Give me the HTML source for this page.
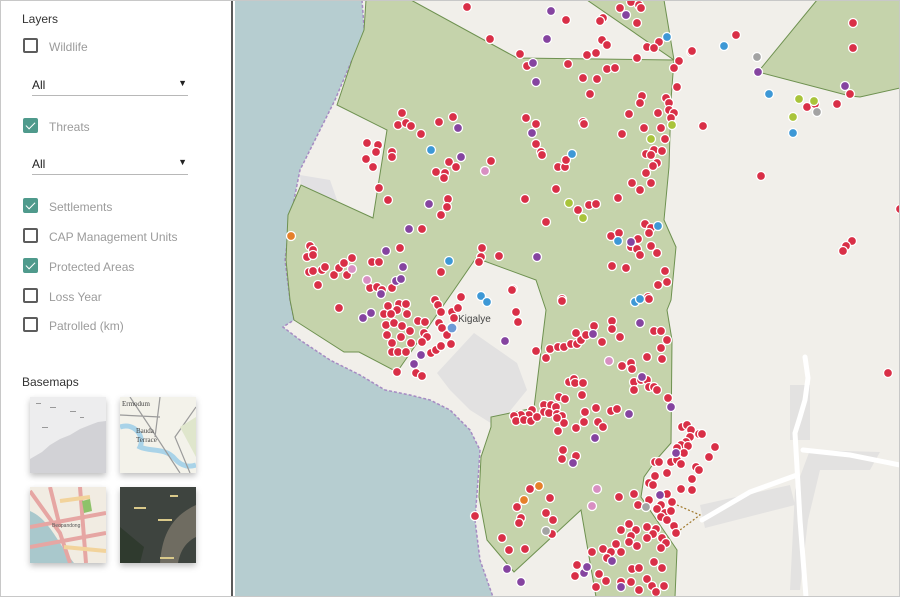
<!DOCTYPE html>
<html><head><meta charset="utf-8"><style>
*{margin:0;padding:0;box-sizing:border-box}
html,body{width:900px;height:597px;overflow:hidden}
body{background:#fff;font-family:"Liberation Sans",Arial,sans-serif;position:relative}
#frame{position:absolute;left:0;top:0;width:900px;height:597px;border:1px solid #c8c8c8;z-index:5;pointer-events:none}
#side{position:absolute;left:0;top:0;width:233px;height:597px;background:#fff;border-right:2px solid #5a5a5a;overflow:hidden}
.h{position:absolute;left:22px;font-size:12px;color:#333}
.cb{position:absolute;left:23px;width:15px;height:15px;border:2px solid #5c5c5c;border-radius:2px;background:#fff}
.cb.on{border:none;background:#4f9a8c}
.cb.on:after{content:"";position:absolute;left:5px;top:2px;width:4px;height:8px;border:solid #fff;border-width:0 1.5px 1.5px 0;transform:rotate(45deg)}
.lb{position:absolute;left:49px;font-size:12px;color:#9b9b9b}
.sel{position:absolute;left:32px;width:156px;height:18px;border-bottom:1.5px solid #b8b8b8;font-size:12px;color:#222}
.sel span{position:absolute;right:1px;top:0;font-size:9px}
.th{position:absolute;width:76px;height:76px;box-shadow:0 3px 6px rgba(0,0,0,.25);overflow:hidden}
#map{position:absolute;left:235px;top:0;display:block}
</style></head><body>
<div id="side">
<div class="h" style="top:12px">Layers</div>
<div class="cb" style="top:38px"></div><div class="lb" style="top:40px">Wildlife</div>
<div class="sel" style="top:78px">All<span>▼</span></div>
<div class="cb on" style="top:118px"></div><div class="lb" style="top:120px">Threats</div>
<div class="sel" style="top:157px">All<span>▼</span></div>
<div class="cb on" style="top:198px"></div><div class="lb" style="top:200px">Settlements</div>
<div class="cb" style="top:228px"></div><div class="lb" style="top:230px">CAP Management Units</div>
<div class="cb on" style="top:258px"></div><div class="lb" style="top:260px">Protected Areas</div>
<div class="cb" style="top:288px"></div><div class="lb" style="top:290px">Loss Year</div>
<div class="cb" style="top:317px"></div><div class="lb" style="top:319px">Patrolled (km)</div>
<div class="h" style="top:375px">Basemaps</div>
<div class="th" style="left:30px;top:397px;background:#ededee">
<svg width="76" height="76"><path d="M0 76V62L12 55 20 48 30 42 40 38 50 32 60 28 68 25 76 24V76Z" fill="#d2d2d6"/><g fill="#999"><rect x="6" y="6" width="5" height="1"/><rect x="20" y="10" width="6" height="1"/><rect x="40" y="14" width="6" height="1"/><rect x="12" y="30" width="6" height="1"/><rect x="50" y="20" width="4" height="1"/></g></svg></div>
<div class="th" style="left:120px;top:397px;background:#f3f2ea">
<svg width="76" height="76"><path d="M0 30C15 25 25 40 20 50 30 55 45 50 55 62 62 70 70 70 76 68" stroke="#a9d3e8" stroke-width="5" fill="none"/><path d="M10 0L30 30 60 76M40 0 35 40M76 10 55 40 70 76M0 18 40 20" stroke="#9b9b9b" stroke-width="1.2" fill="none"/><path d="M60 30 76 20V60Z" fill="#dfe6cc"/><text x="2" y="9" font-size="7" fill="#444" font-family="Liberation Serif">Ermodum</text><text x="16" y="36" font-size="7" fill="#444" font-family="Liberation Serif">Bauda</text><text x="16" y="45" font-size="7" fill="#444" font-family="Liberation Serif">Terrace</text></svg></div>
<div class="th" style="left:30px;top:487px;background:#f1ece2">
<svg width="76" height="76"><path d="M0 24C14 30 22 44 30 56 36 66 44 76 44 76H0Z" fill="#a9c8cc"/><path d="M0 4 30 46 40 76M0 40 76 26M20 0 30 40M50 0 56 76M0 60 76 46" stroke="#e6a6a3" stroke-width="4" fill="none"/><path d="M30 14 60 10M34 60 76 64" stroke="#f2d39b" stroke-width="4" fill="none"/><path d="M52 14 60 12 62 24 54 26Z" fill="#8ec26a"/><text x="22" y="40" font-size="5" fill="#555">Beopandong</text></svg></div>
<div class="th" style="left:120px;top:487px;background:#3e443f">
<svg width="76" height="76"><path d="M40 76C42 50 50 30 76 18V50C64 56 60 66 58 76Z" fill="#6f6c61"/><path d="M0 40 24 60 20 76H0Z" fill="#2f3a2e"/><g fill="#d9c98a"><rect x="14" y="20" width="12" height="2"/><rect x="38" y="32" width="14" height="2"/><rect x="40" y="70" width="14" height="2"/><rect x="50" y="8" width="8" height="2"/></g></svg></div>
</div>
<svg id="map" width="665" height="597" viewBox="235 0 665 597">
<rect x="235" y="0" width="665" height="597" fill="#f1efea"/>
<path d="M235 0H362L365 40 352 60 335 100 300 170 290 220 285 260 290 300 294 320 283 327 300 340 330 360 360 375 385 390 410 395 430 400 450 410 470 430 480 450 478 480 475 520 480 560 493 597H235Z" fill="#b6cdd0"/>
<path d="M362 0 365 40 352 60 335 100 300 170 290 220 285 260 290 300 294 320 283 327 300 340 330 360 360 375 385 390 410 395 430 400 450 410 470 430 480 450 478 480 475 520 480 560 493 597" fill="none" stroke="#a68bc3" stroke-width="1.5" stroke-dasharray="3 2"/>
<path d="M300 175 330 180 337 200 320 210 302 200Z" fill="#e2e1e3"/>
<path d="M437 373 474 333 517 363 527 390 497 427 470 410 450 390Z" fill="#e2e1e1"/>
<path d="M790 385H810V440H790ZM810 450 880 452 870 470 820 470 808 520 800 590 790 590 795 490ZM700 505 790 485 795 505 705 528Z" fill="#e3e2e1"/>
<path d="M366 0 411 0 517 58 674 60 671 100 669 167 664 220 676 247 671 300 667 310 672 340 671 443 656 460 644 477 641 497 677 550 675 597 596 597 581 510 514 572 487 540 479 497 481 457 491 427 491 417 534 408 546 310 536 280 476 258 454 290 397 372 359 352 344 352 294 320 290 300 286 260 288 215 301 185 373 218 387 130 337 105 352 60 364 30Z" fill="#c5d3ab" stroke="#6e9150" stroke-width="1"/>
<path d="M587 0 664 0 674 60Z" fill="#c5d3ab" stroke="#6e9150"/>
<path d="M817 0 900 0 900 88 860 97 850 96 758 72Z" fill="#c5d3ab" stroke="#6e9150"/>
<path d="M808 378 805 357 M808 378 805 400 800 417 795 433 797 467 800 520 806 597M803 450 850 455 900 465M797 475 750 492 702 520" stroke="#fff" stroke-width="5" fill="none" stroke-linecap="round"/>
<path d="M677 505 700 515 680 530" stroke="#a0782a" stroke-width="1.2" stroke-dasharray="2 2" fill="none"/>
<text x="458" y="322" font-size="10" fill="#444" font-family="Liberation Sans,sans-serif">Kigalye</text>
<g stroke="#fff" stroke-width="1.3">
<g fill="#d92f47">
<circle cx="467" cy="7" r="4.5"/><circle cx="566" cy="20" r="4.5"/><circle cx="490" cy="39" r="4.5"/><circle cx="520" cy="54" r="4.5"/><circle cx="603" cy="18" r="4.5"/><circle cx="600" cy="21" r="4.5"/><circle cx="620" cy="8" r="4.5"/><circle cx="631" cy="2" r="4.5"/><circle cx="639" cy="5" r="4.5"/><circle cx="641" cy="8" r="4.5"/><circle cx="637" cy="23" r="4.5"/><circle cx="602" cy="40" r="4.5"/><circle cx="607" cy="45" r="4.5"/><circle cx="587" cy="55" r="4.5"/><circle cx="596" cy="53" r="4.5"/><circle cx="647" cy="47" r="4.5"/><circle cx="659" cy="42" r="4.5"/><circle cx="654" cy="48" r="4.5"/><circle cx="691" cy="52" r="4.5"/><circle cx="679" cy="61" r="4.5"/><circle cx="674" cy="68" r="4.5"/><circle cx="677" cy="87" r="4.5"/><circle cx="637" cy="58" r="4.5"/><circle cx="568" cy="64" r="4.5"/><circle cx="527" cy="66" r="4.5"/><circle cx="583" cy="78" r="4.5"/><circle cx="597" cy="79" r="4.5"/><circle cx="590" cy="94" r="4.5"/><circle cx="607" cy="69" r="4.5"/><circle cx="615" cy="68" r="4.5"/><circle cx="642" cy="96" r="4.5"/><circle cx="640" cy="103" r="4.5"/><circle cx="666" cy="98" r="4.5"/><circle cx="669" cy="103" r="4.5"/><circle cx="629" cy="114" r="4.5"/><circle cx="658" cy="113" r="4.5"/><circle cx="669" cy="110" r="4.5"/><circle cx="674" cy="113" r="4.5"/><circle cx="671" cy="118" r="4.5"/><circle cx="644" cy="128" r="4.5"/><circle cx="661" cy="128" r="4.5"/><circle cx="622" cy="134" r="4.5"/><circle cx="665" cy="139" r="4.5"/><circle cx="646" cy="154" r="4.5"/><circle cx="654" cy="150" r="4.5"/><circle cx="662" cy="151" r="4.5"/><circle cx="651" cy="155" r="4.5"/><circle cx="657" cy="163" r="4.5"/><circle cx="653" cy="166" r="4.5"/><circle cx="646" cy="173" r="4.5"/><circle cx="632" cy="183" r="4.5"/><circle cx="651" cy="183" r="4.5"/><circle cx="640" cy="190" r="4.5"/><circle cx="618" cy="198" r="4.5"/><circle cx="645" cy="224" r="4.5"/><circle cx="651" cy="228" r="4.5"/><circle cx="649" cy="233" r="4.5"/><circle cx="638" cy="239" r="4.5"/><circle cx="611" cy="236" r="4.5"/><circle cx="619" cy="233" r="4.5"/><circle cx="631" cy="247" r="4.5"/><circle cx="637" cy="249" r="4.5"/><circle cx="640" cy="255" r="4.5"/><circle cx="651" cy="246" r="4.5"/><circle cx="657" cy="253" r="4.5"/><circle cx="612" cy="266" r="4.5"/><circle cx="626" cy="268" r="4.5"/><circle cx="665" cy="271" r="4.5"/><circle cx="667" cy="282" r="4.5"/><circle cx="658" cy="285" r="4.5"/><circle cx="648" cy="297" r="4.5"/>
<circle cx="526" cy="118" r="4.5"/><circle cx="536" cy="124" r="4.5"/><circle cx="536" cy="144" r="4.5"/><circle cx="541" cy="152" r="4.5"/><circle cx="542" cy="155" r="4.5"/><circle cx="556" cy="189" r="4.5"/><circle cx="558" cy="167" r="4.5"/><circle cx="565" cy="167" r="4.5"/><circle cx="566" cy="160" r="4.5"/><circle cx="583" cy="122" r="4.5"/><circle cx="584" cy="124" r="4.5"/><circle cx="589" cy="205" r="4.5"/><circle cx="596" cy="204" r="4.5"/><circle cx="578" cy="210" r="4.5"/><circle cx="546" cy="222" r="4.5"/><circle cx="525" cy="199" r="4.5"/><circle cx="499" cy="256" r="4.5"/><circle cx="482" cy="248" r="4.5"/><circle cx="481" cy="257" r="4.5"/><circle cx="479" cy="262" r="4.5"/><circle cx="513" cy="289" r="4.5"/><circle cx="562" cy="299" r="4.5"/>
<circle cx="402" cy="113" r="4.5"/><circle cx="398" cy="125" r="4.5"/><circle cx="406" cy="123" r="4.5"/><circle cx="411" cy="126" r="4.5"/><circle cx="439" cy="122" r="4.5"/><circle cx="453" cy="117" r="4.5"/><circle cx="421" cy="134" r="4.5"/><circle cx="367" cy="143" r="4.5"/><circle cx="378" cy="145" r="4.5"/><circle cx="376" cy="152" r="4.5"/><circle cx="366" cy="159" r="4.5"/><circle cx="373" cy="167" r="4.5"/><circle cx="392" cy="152" r="4.5"/><circle cx="392" cy="157" r="4.5"/><circle cx="449" cy="162" r="4.5"/><circle cx="456" cy="167" r="4.5"/><circle cx="436" cy="172" r="4.5"/><circle cx="445" cy="173" r="4.5"/><circle cx="444" cy="178" r="4.5"/><circle cx="491" cy="161" r="4.5"/><circle cx="379" cy="188" r="4.5"/><circle cx="388" cy="200" r="4.5"/><circle cx="448" cy="199" r="4.5"/><circle cx="447" cy="207" r="4.5"/><circle cx="441" cy="215" r="4.5"/><circle cx="422" cy="229" r="4.5"/><circle cx="400" cy="248" r="4.5"/><circle cx="310" cy="246" r="4.5"/><circle cx="313" cy="250" r="4.5"/><circle cx="307" cy="257" r="4.5"/><circle cx="313" cy="255" r="4.5"/><circle cx="309" cy="272" r="4.5"/><circle cx="313" cy="271" r="4.5"/><circle cx="322" cy="270" r="4.5"/><circle cx="325" cy="267" r="4.5"/><circle cx="334" cy="275" r="4.5"/><circle cx="339" cy="268" r="4.5"/><circle cx="344" cy="263" r="4.5"/><circle cx="352" cy="258" r="4.5"/><circle cx="347" cy="275" r="4.5"/><circle cx="318" cy="285" r="4.5"/><circle cx="372" cy="262" r="4.5"/><circle cx="379" cy="262" r="4.5"/><circle cx="370" cy="288" r="4.5"/><circle cx="377" cy="287" r="4.5"/><circle cx="382" cy="290" r="4.5"/><circle cx="392" cy="288" r="4.5"/><circle cx="441" cy="272" r="4.5"/>
<circle cx="339" cy="308" r="4.5"/><circle cx="388" cy="306" r="4.5"/><circle cx="399" cy="304" r="4.5"/><circle cx="406" cy="304" r="4.5"/><circle cx="397" cy="310" r="4.5"/><circle cx="384" cy="314" r="4.5"/><circle cx="391" cy="314" r="4.5"/><circle cx="407" cy="314" r="4.5"/><circle cx="386" cy="325" r="4.5"/><circle cx="394" cy="323" r="4.5"/><circle cx="402" cy="326" r="4.5"/><circle cx="418" cy="321" r="4.5"/><circle cx="425" cy="322" r="4.5"/><circle cx="387" cy="335" r="4.5"/><circle cx="401" cy="337" r="4.5"/><circle cx="410" cy="331" r="4.5"/><circle cx="424" cy="333" r="4.5"/><circle cx="427" cy="337" r="4.5"/><circle cx="392" cy="343" r="4.5"/><circle cx="411" cy="343" r="4.5"/><circle cx="422" cy="342" r="4.5"/><circle cx="392" cy="352" r="4.5"/><circle cx="398" cy="352" r="4.5"/><circle cx="406" cy="352" r="4.5"/><circle cx="431" cy="353" r="4.5"/><circle cx="436" cy="350" r="4.5"/><circle cx="441" cy="346" r="4.5"/><circle cx="451" cy="344" r="4.5"/><circle cx="416" cy="373" r="4.5"/><circle cx="422" cy="376" r="4.5"/><circle cx="397" cy="372" r="4.5"/><circle cx="435" cy="300" r="4.5"/><circle cx="438" cy="305" r="4.5"/><circle cx="441" cy="312" r="4.5"/><circle cx="452" cy="312" r="4.5"/><circle cx="458" cy="308" r="4.5"/><circle cx="454" cy="318" r="4.5"/><circle cx="439" cy="323" r="4.5"/><circle cx="442" cy="328" r="4.5"/><circle cx="447" cy="335" r="4.5"/><circle cx="461" cy="297" r="4.5"/><circle cx="512" cy="290" r="4.5"/><circle cx="516" cy="312" r="4.5"/><circle cx="518" cy="322" r="4.5"/><circle cx="536" cy="351" r="4.5"/><circle cx="546" cy="358" r="4.5"/><circle cx="550" cy="349" r="4.5"/><circle cx="558" cy="347" r="4.5"/><circle cx="564" cy="347" r="4.5"/><circle cx="571" cy="344" r="4.5"/><circle cx="577" cy="344" r="4.5"/><circle cx="581" cy="340" r="4.5"/><circle cx="586" cy="335" r="4.5"/><circle cx="576" cy="333" r="4.5"/><circle cx="594" cy="326" r="4.5"/><circle cx="602" cy="342" r="4.5"/><circle cx="612" cy="321" r="4.5"/><circle cx="612" cy="329" r="4.5"/><circle cx="620" cy="337" r="4.5"/><circle cx="654" cy="331" r="4.5"/><circle cx="661" cy="331" r="4.5"/><circle cx="667" cy="340" r="4.5"/><circle cx="661" cy="348" r="4.5"/><circle cx="647" cy="357" r="4.5"/><circle cx="662" cy="359" r="4.5"/><circle cx="622" cy="366" r="4.5"/><circle cx="631" cy="363" r="4.5"/><circle cx="632" cy="369" r="4.5"/><circle cx="562" cy="301" r="4.5"/><circle cx="649" cy="299" r="4.5"/><circle cx="569" cy="382" r="4.5"/><circle cx="574" cy="379" r="4.5"/><circle cx="575" cy="383" r="4.5"/><circle cx="583" cy="383" r="4.5"/><circle cx="582" cy="395" r="4.5"/><circle cx="634" cy="382" r="4.5"/><circle cx="641" cy="380" r="4.5"/><circle cx="647" cy="380" r="4.5"/><circle cx="649" cy="387" r="4.5"/><circle cx="654" cy="387" r="4.5"/><circle cx="657" cy="390" r="4.5"/><circle cx="634" cy="390" r="4.5"/><circle cx="668" cy="398" r="4.5"/><circle cx="559" cy="397" r="4.5"/><circle cx="565" cy="399" r="4.5"/><circle cx="544" cy="405" r="4.5"/><circle cx="551" cy="405" r="4.5"/><circle cx="556" cy="407" r="4.5"/><circle cx="544" cy="412" r="4.5"/><circle cx="549" cy="413" r="4.5"/><circle cx="557" cy="414" r="4.5"/><circle cx="562" cy="416" r="4.5"/><circle cx="564" cy="423" r="4.5"/><circle cx="557" cy="418" r="4.5"/><circle cx="532" cy="410" r="4.5"/><circle cx="529" cy="415" r="4.5"/><circle cx="521" cy="415" r="4.5"/><circle cx="514" cy="416" r="4.5"/><circle cx="516" cy="421" r="4.5"/><circle cx="524" cy="420" r="4.5"/><circle cx="531" cy="421" r="4.5"/><circle cx="537" cy="417" r="4.5"/><circle cx="585" cy="412" r="4.5"/><circle cx="596" cy="408" r="4.5"/><circle cx="611" cy="411" r="4.5"/><circle cx="617" cy="409" r="4.5"/><circle cx="598" cy="422" r="4.5"/><circle cx="603" cy="427" r="4.5"/><circle cx="584" cy="422" r="4.5"/><circle cx="576" cy="428" r="4.5"/><circle cx="558" cy="431" r="4.5"/><circle cx="563" cy="450" r="4.5"/><circle cx="562" cy="459" r="4.5"/><circle cx="576" cy="456" r="4.5"/><circle cx="530" cy="489" r="4.5"/><circle cx="550" cy="498" r="4.5"/><circle cx="517" cy="507" r="4.5"/><circle cx="521" cy="518" r="4.5"/><circle cx="519" cy="523" r="4.5"/><circle cx="546" cy="513" r="4.5"/><circle cx="553" cy="520" r="4.5"/><circle cx="552" cy="534" r="4.5"/><circle cx="502" cy="538" r="4.5"/><circle cx="509" cy="550" r="4.5"/><circle cx="525" cy="549" r="4.5"/><circle cx="619" cy="497" r="4.5"/><circle cx="634" cy="494" r="4.5"/><circle cx="638" cy="505" r="4.5"/><circle cx="621" cy="530" r="4.5"/><circle cx="629" cy="524" r="4.5"/><circle cx="636" cy="530" r="4.5"/><circle cx="631" cy="536" r="4.5"/><circle cx="647" cy="527" r="4.5"/><circle cx="656" cy="529" r="4.5"/><circle cx="653" cy="534" r="4.5"/><circle cx="647" cy="538" r="4.5"/><circle cx="662" cy="538" r="4.5"/><circle cx="666" cy="543" r="4.5"/><circle cx="616" cy="544" r="4.5"/><circle cx="629" cy="542" r="4.5"/><circle cx="637" cy="546" r="4.5"/><circle cx="661" cy="548" r="4.5"/><circle cx="592" cy="552" r="4.5"/><circle cx="603" cy="549" r="4.5"/><circle cx="611" cy="552" r="4.5"/><circle cx="621" cy="552" r="4.5"/><circle cx="607" cy="558" r="4.5"/><circle cx="654" cy="562" r="4.5"/><circle cx="662" cy="568" r="4.5"/><circle cx="632" cy="569" r="4.5"/><circle cx="639" cy="568" r="4.5"/><circle cx="599" cy="574" r="4.5"/><circle cx="606" cy="581" r="4.5"/><circle cx="621" cy="582" r="4.5"/><circle cx="631" cy="582" r="4.5"/><circle cx="647" cy="579" r="4.5"/><circle cx="652" cy="586" r="4.5"/><circle cx="664" cy="586" r="4.5"/><circle cx="596" cy="587" r="4.5"/><circle cx="639" cy="590" r="4.5"/><circle cx="656" cy="592" r="4.5"/><circle cx="577" cy="565" r="4.5"/><circle cx="575" cy="576" r="4.5"/><circle cx="475" cy="516" r="4.5"/><circle cx="649" cy="500" r="4.5"/><circle cx="655" cy="462" r="4.5"/><circle cx="659" cy="462" r="4.5"/><circle cx="682" cy="427" r="4.5"/><circle cx="687" cy="425" r="4.5"/><circle cx="691" cy="430" r="4.5"/><circle cx="699" cy="434" r="4.5"/><circle cx="702" cy="434" r="4.5"/><circle cx="690" cy="437" r="4.5"/><circle cx="686" cy="442" r="4.5"/><circle cx="681" cy="445" r="4.5"/><circle cx="677" cy="448" r="4.5"/><circle cx="688" cy="446" r="4.5"/><circle cx="684" cy="453" r="4.5"/><circle cx="671" cy="462" r="4.5"/><circle cx="677" cy="460" r="4.5"/><circle cx="681" cy="464" r="4.5"/><circle cx="709" cy="457" r="4.5"/><circle cx="715" cy="447" r="4.5"/><circle cx="696" cy="467" r="4.5"/><circle cx="699" cy="470" r="4.5"/><circle cx="692" cy="479" r="4.5"/><circle cx="667" cy="473" r="4.5"/><circle cx="655" cy="476" r="4.5"/><circle cx="649" cy="483" r="4.5"/><circle cx="653" cy="485" r="4.5"/><circle cx="681" cy="489" r="4.5"/><circle cx="692" cy="490" r="4.5"/><circle cx="667" cy="494" r="4.5"/><circle cx="661" cy="505" r="4.5"/><circle cx="657" cy="509" r="4.5"/><circle cx="672" cy="502" r="4.5"/><circle cx="665" cy="513" r="4.5"/><circle cx="671" cy="511" r="4.5"/><circle cx="661" cy="517" r="4.5"/><circle cx="667" cy="520" r="4.5"/><circle cx="674" cy="526" r="4.5"/><circle cx="676" cy="533" r="4.5"/>
<circle cx="853" cy="23" r="4.5"/><circle cx="853" cy="48" r="4.5"/><circle cx="736" cy="35" r="4.5"/><circle cx="692" cy="51" r="4.5"/><circle cx="807" cy="107" r="4.5"/><circle cx="815" cy="104" r="4.5"/><circle cx="837" cy="104" r="4.5"/><circle cx="850" cy="94" r="4.5"/><circle cx="703" cy="126" r="4.5"/><circle cx="761" cy="176" r="4.5"/><circle cx="900" cy="209" r="4.5"/><circle cx="852" cy="241" r="4.5"/><circle cx="846" cy="246" r="4.5"/><circle cx="843" cy="251" r="4.5"/><circle cx="888" cy="373" r="4.5"/>
</g>
<g fill="#8544a0">
<circle cx="551" cy="11" r="4.5"/><circle cx="547" cy="39" r="4.5"/><circle cx="533" cy="63" r="4.5"/><circle cx="536" cy="82" r="4.5"/><circle cx="458" cy="128" r="4.5"/><circle cx="461" cy="157" r="4.5"/><circle cx="532" cy="133" r="4.5"/><circle cx="429" cy="204" r="4.5"/><circle cx="409" cy="229" r="4.5"/><circle cx="386" cy="251" r="4.5"/><circle cx="403" cy="267" r="4.5"/><circle cx="396" cy="281" r="4.5"/><circle cx="401" cy="279" r="4.5"/><circle cx="381" cy="294" r="4.5"/><circle cx="537" cy="257" r="4.5"/><circle cx="631" cy="242" r="4.5"/><circle cx="626" cy="15" r="4.5"/><circle cx="363" cy="318" r="4.5"/><circle cx="371" cy="313" r="4.5"/><circle cx="421" cy="355" r="4.5"/><circle cx="414" cy="364" r="4.5"/><circle cx="505" cy="341" r="4.5"/><circle cx="593" cy="334" r="4.5"/><circle cx="640" cy="323" r="4.5"/><circle cx="642" cy="377" r="4.5"/><circle cx="671" cy="407" r="4.5"/><circle cx="629" cy="414" r="4.5"/><circle cx="595" cy="438" r="4.5"/><circle cx="573" cy="463" r="4.5"/><circle cx="676" cy="453" r="4.5"/><circle cx="660" cy="495" r="4.5"/><circle cx="507" cy="569" r="4.5"/><circle cx="521" cy="582" r="4.5"/><circle cx="584" cy="573" r="4.5"/><circle cx="587" cy="567" r="4.5"/><circle cx="612" cy="561" r="4.5"/><circle cx="621" cy="587" r="4.5"/><circle cx="758" cy="72" r="4.5"/><circle cx="845" cy="86" r="4.5"/>
</g>
<g fill="#3d98d6">
<circle cx="667" cy="37" r="4.5"/><circle cx="431" cy="150" r="4.5"/><circle cx="572" cy="154" r="4.5"/><circle cx="449" cy="261" r="4.5"/><circle cx="618" cy="241" r="4.5"/><circle cx="658" cy="226" r="4.5"/><circle cx="481" cy="296" r="4.5"/><circle cx="487" cy="302" r="4.5"/><circle cx="635" cy="302" r="4.5"/><circle cx="640" cy="299" r="4.5"/><circle cx="724" cy="46" r="4.5"/><circle cx="769" cy="94" r="4.5"/><circle cx="793" cy="133" r="4.5"/>
</g>
<circle cx="452" cy="328" r="5" fill="#6c9ad6"/>
<g fill="#a9c43a"><circle cx="672" cy="125" r="4.5"/><circle cx="651" cy="139" r="4.5"/><circle cx="569" cy="203" r="4.5"/><circle cx="583" cy="218" r="4.5"/><circle cx="799" cy="99" r="4.5"/><circle cx="814" cy="101" r="4.5"/><circle cx="793" cy="117" r="4.5"/></g>
<g fill="#d88fc2"><circle cx="485" cy="171" r="4.5"/><circle cx="352" cy="269" r="4.5"/><circle cx="367" cy="280" r="4.5"/><circle cx="597" cy="489" r="4.5"/><circle cx="592" cy="506" r="4.5"/><circle cx="609" cy="361" r="4.5"/></g>
<g fill="#e5802a"><circle cx="291" cy="236" r="4.5"/><circle cx="539" cy="486" r="4.5"/><circle cx="524" cy="500" r="4.5"/></g>
<g fill="#a3a3a3"><circle cx="546" cy="531" r="4.5"/><circle cx="646" cy="507" r="4.5"/><circle cx="757" cy="57" r="4.5"/><circle cx="817" cy="112" r="4.5"/></g>
</g>
</svg>
<div id="frame"></div>
</body></html>
